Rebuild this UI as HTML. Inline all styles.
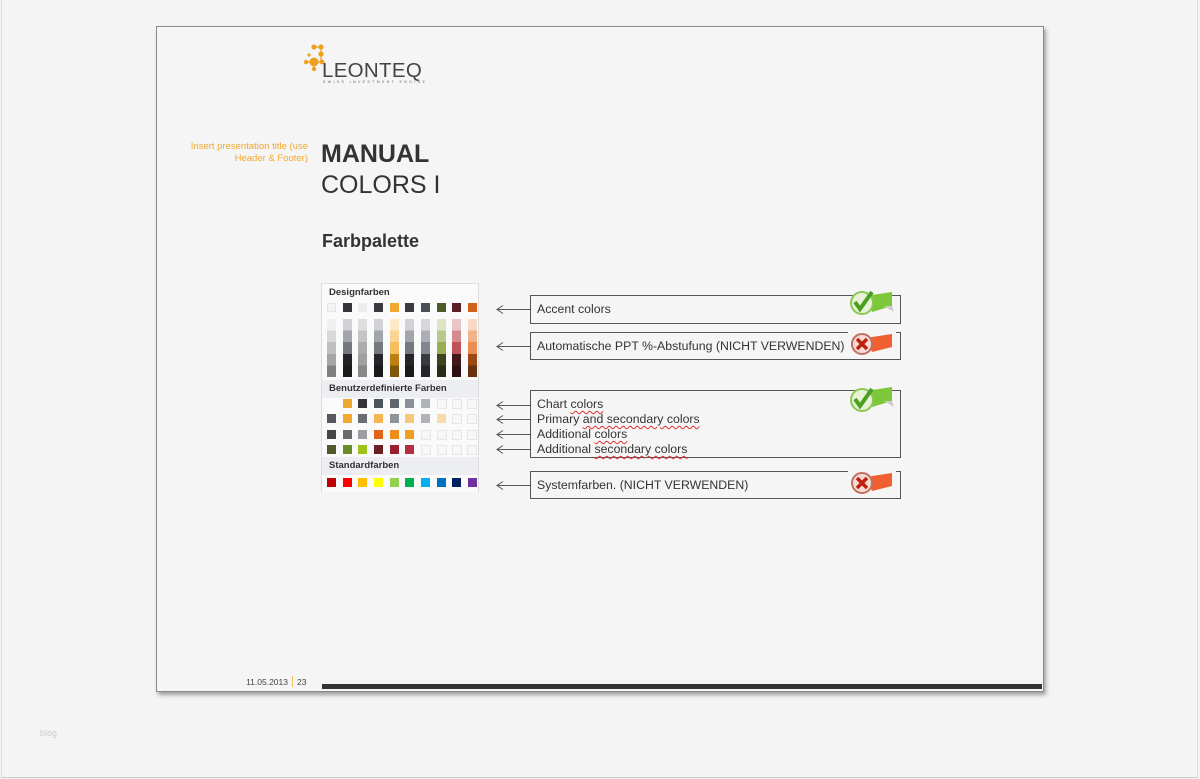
<!DOCTYPE html>
<html><head><meta charset="utf-8"><style>
*{margin:0;padding:0;box-sizing:border-box}
body{width:1200px;height:779px;background:#f4f4f4;position:relative;overflow:hidden;font-family:"Liberation Sans",Arial,sans-serif}
.a{position:absolute}
.slide{left:156px;top:26px;width:888px;height:666px;background:#f5f5f5;border:1px solid #8a8a8a;box-shadow:2px 3px 4px rgba(0,0,0,.35)}
.s{position:absolute;width:9px;height:9px}
.e{position:absolute;width:10px;height:10px;border:1px solid #e6e6e6;background:#f7f7f7}
.box{position:absolute;left:530px;width:371px;border:1px solid #555;background:#f5f5f5}
.t{position:absolute;left:537px;font-size:12.3px;color:#333;white-space:nowrap}
.sq{text-decoration:underline wavy #e03030;text-decoration-thickness:1px;text-underline-offset:2px}
</style></head><body>
<div class="a" style="left:1px;top:0;width:1197px;height:778px;border-left:1px solid #ddd;border-right:1px solid #ddd;border-bottom:1px solid #ccc"></div>
<div class="a" style="left:40px;top:728px;font-size:9px;color:#ccc">blog</div>
<div class="a slide"></div>

<!-- logo -->
<svg class="a" style="left:300px;top:42px" width="30" height="32" viewBox="0 0 30 32">
<g fill="#f0a020">
<circle cx="14" cy="20" r="4.5"/><circle cx="14" cy="5" r="2.6"/><circle cx="21" cy="5" r="2.6"/><circle cx="21" cy="12" r="2.6"/><circle cx="6" cy="20" r="2.2"/><circle cx="22" cy="20" r="2.4"/><circle cx="14" cy="27" r="2.2"/><circle cx="9" cy="13" r="1.6"/>
</g>
<path d="M14 5 H21 V20 M6 20 H22 M14 20 V27" stroke="#f0a020" stroke-width="1.2" fill="none"/></svg>
<div class="a" style="left:322px;top:61px;font-size:20.5px;color:#444;letter-spacing:0.3px;line-height:20px">LEONTEQ</div>
<div class="a" style="left:323px;top:80px;font-size:3.5px;color:#666;letter-spacing:2.4px">SWISS INVESTMENT ENGINE</div>

<div class="a" style="left:160px;top:141px;width:148px;text-align:right;font-size:9.5px;line-height:11.5px;color:#f0a830">Insert presentation title (use Header &amp; Footer)</div>
<div class="a" style="left:321px;top:140px;font-size:25px;font-weight:bold;color:#333;line-height:28px">MANUAL</div>
<div class="a" style="left:321px;top:171px;font-size:25px;color:#333;line-height:28px">COLORS I</div>
<div class="a" style="left:322px;top:231px;font-size:18px;font-weight:bold;color:#333">Farbpalette</div>

<!-- palette -->
<div class="a" style="left:321px;top:283px;width:158px;height:209px;background:#fafafa;border:1px solid #ddd;border-bottom:none"></div>
<div class="a" style="left:322px;top:380px;width:156px;height:18px;background:#eceef1"></div>
<div class="a" style="left:322px;top:457px;width:156px;height:18px;background:#eceef1"></div>
<div class="a" style="left:329px;top:287px;font-size:9.5px;font-weight:bold;color:#333">Designfarben</div>
<div class="a" style="left:329px;top:383px;font-size:9.5px;font-weight:bold;color:#333">Benutzerdefinierte Farben</div>
<div class="a" style="left:329px;top:460px;font-size:9.5px;font-weight:bold;color:#333">Standardfarben</div>

<div class="s" style="left:327px;top:303px;background:#f4f4f4;border:1px solid #e5e5e5"></div>
<div class="s" style="left:343px;top:303px;background:#333538"></div>
<div class="s" style="left:358px;top:303px;background:#ededed"></div>
<div class="s" style="left:374px;top:303px;background:#3a3b3f"></div>
<div class="s" style="left:390px;top:303px;background:#f0a830"></div>
<div class="s" style="left:405px;top:303px;background:#3a3b3f"></div>
<div class="s" style="left:421px;top:303px;background:#4a4e55"></div>
<div class="s" style="left:437px;top:303px;background:#4f5a2a"></div>
<div class="s" style="left:452px;top:303px;background:#5a2025"></div>
<div class="s" style="left:468px;top:303px;background:#d0601a"></div>

<div class="a" style="left:327px;top:319px;width:9px;height:58px;background:linear-gradient(#f0f0f0 20%,#d8d8d8 20% 40%,#bfbfbf 40% 60%,#a5a5a5 60% 80%,#808080 80%)"></div>
<div class="a" style="left:343px;top:319px;width:9px;height:58px;background:linear-gradient(#d0d2d5 20%,#a2a5ab 20% 40%,#75787f 40% 60%,#222326 60% 80%,#1a1a1c 80%)"></div>
<div class="a" style="left:358px;top:319px;width:9px;height:58px;background:linear-gradient(#dedede 20%,#c4c4c4 20% 40%,#acacac 40% 60%,#a0a0a0 60% 80%,#888 80%)"></div>
<div class="a" style="left:374px;top:319px;width:9px;height:58px;background:linear-gradient(#d0d2d5 20%,#a2a5ab 20% 40%,#75787f 40% 60%,#242528 60% 80%,#1a1a1c 80%)"></div>
<div class="a" style="left:390px;top:319px;width:9px;height:58px;background:linear-gradient(#fde9c8 20%,#fad494 20% 40%,#f7be5f 40% 60%,#c07f12 60% 80%,#80550c 80%)"></div>
<div class="a" style="left:405px;top:319px;width:9px;height:58px;background:linear-gradient(#d0d2d5 20%,#a2a5ab 20% 40%,#75787f 40% 60%,#242528 60% 80%,#1a1a1c 80%)"></div>
<div class="a" style="left:421px;top:319px;width:9px;height:58px;background:linear-gradient(#d5d7da 20%,#abafb5 20% 40%,#81868f 40% 60%,#383b40 60% 80%,#25272a 80%)"></div>
<div class="a" style="left:437px;top:319px;width:9px;height:58px;background:linear-gradient(#dce4c5 20%,#b9c98b 20% 40%,#97ae52 40% 60%,#3b431f 60% 80%,#272d15 80%)"></div>
<div class="a" style="left:452px;top:319px;width:9px;height:58px;background:linear-gradient(#e9c5c7 20%,#d48b90 20% 40%,#c05158 40% 60%,#43181b 60% 80%,#2d1012 80%)"></div>
<div class="a" style="left:468px;top:319px;width:9px;height:58px;background:linear-gradient(#f8d9c4 20%,#f1b38a 20% 40%,#ea8d50 40% 60%,#9c4812 60% 80%,#68300c 80%)"></div>

<div class="s" style="left:343px;top:399px;background:#f0a830"></div>
<div class="s" style="left:358px;top:399px;background:#333538"></div>
<div class="s" style="left:374px;top:399px;background:#4a5560"></div>
<div class="s" style="left:390px;top:399px;background:#5f6670"></div>
<div class="s" style="left:405px;top:399px;background:#8a8f98"></div>
<div class="s" style="left:421px;top:399px;background:#b0b3b8"></div>
<div class="e" style="left:437px;top:399px"></div><div class="e" style="left:452px;top:399px"></div><div class="e" style="left:467px;top:399px"></div>
<div class="s" style="left:327px;top:414px;background:#555860"></div>
<div class="s" style="left:343px;top:414px;background:#f0a830"></div>
<div class="s" style="left:358px;top:414px;background:#6a6d75"></div>
<div class="s" style="left:374px;top:414px;background:#f5b550"></div>
<div class="s" style="left:390px;top:414px;background:#8f939a"></div>
<div class="s" style="left:405px;top:414px;background:#f7c778"></div>
<div class="s" style="left:421px;top:414px;background:#b0b3b8"></div>
<div class="s" style="left:437px;top:414px;background:#f6dca8"></div>
<div class="e" style="left:452px;top:414px"></div><div class="e" style="left:467px;top:414px"></div>
<div class="s" style="left:327px;top:430px;background:#444648"></div>
<div class="s" style="left:343px;top:430px;background:#6b6b6e"></div>
<div class="s" style="left:358px;top:430px;background:#9c9ea2"></div>
<div class="s" style="left:374px;top:430px;background:#e0641a"></div>
<div class="s" style="left:390px;top:430px;background:#f08c1a"></div>
<div class="s" style="left:405px;top:430px;background:#f0a020"></div>
<div class="e" style="left:421px;top:430px"></div><div class="e" style="left:437px;top:430px"></div><div class="e" style="left:452px;top:430px"></div><div class="e" style="left:467px;top:430px"></div>
<div class="s" style="left:327px;top:445px;background:#4f5a2a"></div>
<div class="s" style="left:343px;top:445px;background:#6b8a2a"></div>
<div class="s" style="left:358px;top:445px;background:#9ec21a"></div>
<div class="s" style="left:374px;top:445px;background:#6a1f25"></div>
<div class="s" style="left:390px;top:445px;background:#9a2030"></div>
<div class="s" style="left:405px;top:445px;background:#b03040"></div>
<div class="e" style="left:421px;top:445px"></div><div class="e" style="left:437px;top:445px"></div><div class="e" style="left:452px;top:445px"></div><div class="e" style="left:467px;top:445px"></div>
<div class="s" style="left:327px;top:478px;background:#c00000"></div>
<div class="s" style="left:343px;top:478px;background:#ff0000"></div>
<div class="s" style="left:358px;top:478px;background:#ffc000"></div>
<div class="s" style="left:374px;top:478px;background:#ffff00"></div>
<div class="s" style="left:390px;top:478px;background:#92d050"></div>
<div class="s" style="left:405px;top:478px;background:#00b050"></div>
<div class="s" style="left:421px;top:478px;background:#00b0f0"></div>
<div class="s" style="left:437px;top:478px;background:#0070c0"></div>
<div class="s" style="left:452px;top:478px;background:#002060"></div>
<div class="s" style="left:468px;top:478px;background:#7030a0"></div>

<!-- arrows -->
<svg class="a" style="left:490px;top:290px" width="45" height="210" viewBox="490 290 45 210">
<g stroke="#555" stroke-width="1" fill="none">
<path d="M497 309.5 H531 M503 305.5 L497 309.5 L503 313.5"/>
<path d="M497 346.5 H531 M503 342.5 L497 346.5 L503 350.5"/>
<path d="M497 405.5 H531 M503 401.5 L497 405.5 L503 409.5"/>
<path d="M497 419.5 H531 M503 415.5 L497 419.5 L503 423.5"/>
<path d="M497 434.5 H531 M503 430.5 L497 434.5 L503 438.5"/>
<path d="M497 449.5 H531 M503 445.5 L497 449.5 L503 453.5"/>
<path d="M497 485.5 H531 M503 481.5 L497 485.5 L503 489.5"/>
</g></svg>

<div class="box" style="top:295px;height:29px"></div>
<div class="box" style="top:332px;height:28px"></div>
<div class="box" style="top:390px;height:68px"></div>
<div class="box" style="top:471px;height:28px"></div>
<div class="t" style="top:302px">Accent colors</div>
<div class="t" style="top:339px">Automatische PPT %-Abstufung (NICHT VERWENDEN)</div>
<div class="t" style="top:397px;line-height:15px">Chart <span class="sq">colors</span><br>Primary <span class="sq">and secondary colors</span><br>Additional <span class="sq">colors</span><br>Additional <span class="sq">secondary colors</span></div>
<div class="t" style="top:478px">Systemfarben. (NICHT VERWENDEN)</div>

<svg class="a" style="left:848px;top:288px" width="48" height="30" viewBox="0 0 48 30">
<rect x="0" y="0" width="48" height="7" fill="#f5f5f5"/>
<path d="M18 8 L44 4 L44 18 L24 24 Z" fill="#7cc83a"/><path d="M36 18 L44 18 L46 24 Z" fill="#ccc"/>
<circle cx="14" cy="15" r="11" fill="#e8f2d8" stroke="#8ac850" stroke-width="2"/>
<path d="M7 14 L12 21 L24 4" fill="none" stroke="#4aa020" stroke-width="4"/>
</svg>
<svg class="a" style="left:848px;top:330px" width="48" height="28" viewBox="0 0 48 28">
<rect x="0" y="0" width="48" height="4" fill="#f5f5f5"/>
<path d="M18 8 L44 4 L44 17 L24 22 Z" fill="#f06030"/>
<circle cx="14" cy="14" r="10" fill="#f4dcd4" stroke="#c07060" stroke-width="2"/>
<path d="M9 9 L19 19 M19 9 L9 19" stroke="#c02010" stroke-width="3.5"/>
</svg>
<svg class="a" style="left:848px;top:383px" width="48" height="30" viewBox="0 0 48 30">
<rect x="0" y="0" width="48" height="7" fill="#f5f5f5"/>
<path d="M18 8 L44 4 L44 18 L24 24 Z" fill="#7cc83a"/><path d="M36 18 L44 18 L46 24 Z" fill="#ccc"/>
<circle cx="14" cy="17" r="11" fill="#e8f2d8" stroke="#8ac850" stroke-width="2"/>
<path d="M7 16 L12 23 L24 6" fill="none" stroke="#4aa020" stroke-width="4"/>
</svg>
<svg class="a" style="left:848px;top:469px" width="48" height="28" viewBox="0 0 48 28">
<rect x="0" y="0" width="48" height="4" fill="#f5f5f5"/>
<path d="M18 8 L44 4 L44 17 L24 22 Z" fill="#f06030"/>
<circle cx="14" cy="14" r="10" fill="#f4dcd4" stroke="#c07060" stroke-width="2"/>
<path d="M9 9 L19 19 M19 9 L9 19" stroke="#c02010" stroke-width="3.5"/>
</svg>

<div class="a" style="left:230px;top:677px;width:58px;text-align:right;font-size:8.5px;color:#444">11.05.2013</div>
<div class="a" style="left:292px;top:676px;width:1px;height:11px;background:#f0c060"></div>
<div class="a" style="left:297px;top:677px;font-size:8.5px;color:#444">23</div>
<div class="a" style="left:322px;top:684px;width:720px;height:5px;background:#333"></div>
</body></html>
